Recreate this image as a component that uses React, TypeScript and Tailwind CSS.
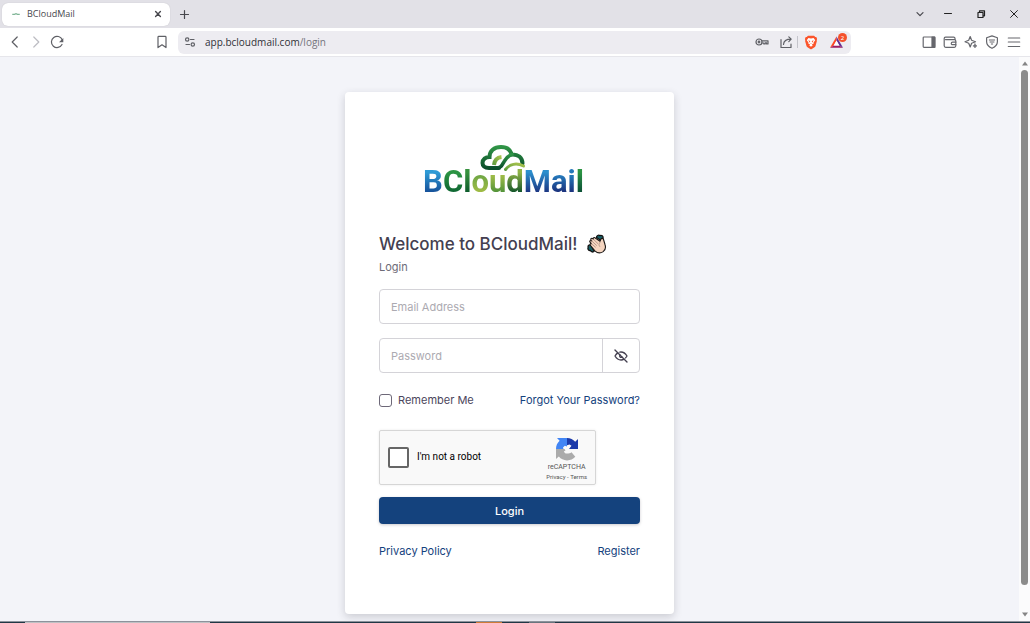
import React from "react";

type IconProps = { className?: string; children: React.ReactNode; box?: string };

function Icon({ className = "size-4", children, box = "0 0 16 16" }: IconProps) {
  return (
    <svg
      viewBox={box}
      className={className}
      fill="none"
      stroke="currentColor"
      strokeWidth="1.2"
      strokeLinecap="round"
      strokeLinejoin="round"
      aria-hidden="true"
    >
      {children}
    </svg>
  );
}

function ToolButton({ label, children }: { label: string; children: React.ReactNode }) {
  return (
    <button type="button" aria-label={label} className="flex size-4 shrink-0 items-center justify-center">
      {children}
    </button>
  );
}

function TabStrip() {
  return (
    <div className="flex h-7 items-center bg-[#e2e1e7] pr-2 text-[#47474d]">
      <div className="ml-0.5 flex h-[23px] w-[168px] items-center rounded-md bg-white pr-1 pl-2 shadow-[0_0_1px_rgba(0,0,0,0.2)]">
        <svg viewBox="0 0 16 16" className="mr-1 size-3" fill="none" aria-hidden="true">
          <path d="M3 8.500h3l2-1 2 1h3" stroke="#7fb596" strokeWidth="1.500" />
        </svg>
        <span className="flex-1 pl-px font-['Open_Sans',sans-serif] text-[9px] leading-3">BCloudMail</span>
        <ToolButton label="Close tab">
          <Icon>
            <path d="M5.6 5.6l4.8 4.8M10.4 5.6l-4.8 4.8" strokeWidth="1.4" />
          </Icon>
        </ToolButton>
      </div>
      <div className="ml-1.5">
        <ToolButton label="New tab">
          <Icon>
            <path d="M8.500 4.500v8M4.500 8.500h8" />
          </Icon>
        </ToolButton>
      </div>
      <div className="ml-auto flex items-center">
        <ToolButton label="Search tabs">
          <Icon>
            <path d="M5 6.7l3 3 3-3" />
          </Icon>
        </ToolButton>
        <div className="ml-3 flex gap-[17px] text-[#222]">
          <ToolButton label="Minimize">
            <Icon>
              <path d="M4.500 7.500h7" strokeWidth="1" />
            </Icon>
          </ToolButton>
          <ToolButton label="Restore">
            <Icon>
              <path d="M5 6.5h5v5H5zM6.5 6V4.8h5v5h-1" />
            </Icon>
          </ToolButton>
          <ToolButton label="Close window">
            <Icon>
              <path d="M4.6 4.6l6.8 6.8M11.4 4.6l-6.8 6.8" strokeWidth="1" />
            </Icon>
          </ToolButton>
        </div>
      </div>
    </div>
  );
}

function Toolbar() {
  return (
    <div className="flex h-[29px] items-center border-b border-[#e6e6eb] bg-white pr-2 pl-[7px] text-[#5f6066]">
      <div className="flex gap-[5px]">
        <ToolButton label="Back">
          <Icon>
            <path d="M10.2 3L5.2 8l5 5" />
          </Icon>
        </ToolButton>
        <span className="flex text-[#bdbdc3]">
          <ToolButton label="Forward">
            <Icon>
              <path d="M5.8 3l5 5-5 5" />
            </Icon>
          </ToolButton>
        </span>
        <ToolButton label="Reload">
          <Icon>
            <path d="M13 10.500A5.600 5.600 0 1 1 13.200 5.800" />
            <path d="M14.300 4v4.300H10z" fill="currentColor" stroke="none" />
          </Icon>
        </ToolButton>
      </div>
      <div className="ml-[89px]">
        <ToolButton label="Bookmark">
          <Icon>
            <path d="M4 3.2c0-.5.3-.8.8-.8h6.4c.5 0 .8.3.8.8v10.4L8 10.8l-4 2.8z" />
          </Icon>
        </ToolButton>
      </div>
      <div className="ml-2 flex h-[23px] min-w-0 flex-1 items-center rounded-md bg-[#edecf1] pr-1.5 pl-1">
        <ToolButton label="Site settings">
          <Icon>
            <circle cx="5.2" cy="5.5" r="1.7" />
            <path d="M8.5 5.5H12M4 10.5h3.5" />
            <circle cx="10.8" cy="10.5" r="1.7" />
          </Icon>
        </ToolButton>
        <div className="ml-[7px] flex-1 truncate font-['Open_Sans',sans-serif] text-[10px] leading-4 text-[#303036]">
          app.bcloudmail.com<span className="text-[#74747c]">/login</span>
        </div>
        <div className="flex items-center">
          <ToolButton label="Passwords">
            <Icon>
              <circle cx="5" cy="8" r="3" />
              <circle cx="5" cy="8" r="0.8" />
              <path d="M8 6.8h6v3.2h-1.4V8.800h-1.4V10H9.800V9H8" />
            </Icon>
          </ToolButton>
          <span className="ml-2 flex">
            <ToolButton label="Share">
              <Icon>
                <path d="M3 5.500v8h10v-3.300M5.500 10.500c.2-3.400 2-5.300 7.500-5.300M10.800 2.800l2.400 2.400-2.400 2.400" />
              </Icon>
            </ToolButton>
          </span>
          <span className="ml-[3px] h-3 w-px bg-[#c4c4cb]" />
          <span className="ml-[5px] flex">
            <ToolButton label="Brave Shields">
              <svg viewBox="0 0 16 16" className="size-4" aria-hidden="true">
                <path
                  d="M5 1.800h6l1.300 1.300 1-.1.800 2-.4 1.200.2.800-1.400 5c-.2.600-.5 1-1 1.300L8.800 15a1.500 1.500 0 0 1-1.600 0l-2.700-1.700c-.5-.3-.8-.7-1-1.300L2.100 7l.2-.8L1.900 5l.8-2 1 .1z"
                  fill="#fb542b"
                />
                <path
                  d="M5.400 4l2.600.5L10.600 4l1.600 2.200-1.700 2.300.3 1-1.900.8.900 1L8 12.800l-1.800-1.500.9-1-1.900-.8.3-1L3.800 6.200z"
                  fill="#fff"
                />
                <path d="M5.200 6.300l2 .7-.3 1.700zM10.800 6.300l-2 .7.3 1.700zM7.400 9h1.200L8 10z" fill="#fb542b" />
              </svg>
            </ToolButton>
          </span>
          <span className="relative ml-[10px] flex">
            <ToolButton label="Brave Rewards">
              <svg viewBox="0 0 16 16" className="size-4" aria-hidden="true">
                <path d="M7.500 2.500L1 13.700l3.700-2.100 2.800-5z" fill="#ff4724" />
                <path d="M1 13.700h13l-3.700-2.100H4.700z" fill="#9e1f63" />
                <path d="M14 13.700L7.500 2.500v4.100l2.800 5z" fill="#662d91" />
                <path d="M7.500 6.600l2.800 5H4.700z" fill="#fff" />
              </svg>
            </ToolButton>
            <span className="absolute -top-px -right-0.5 flex size-[9px] items-center justify-center rounded-full bg-[#f4512c] text-[6px] leading-none text-white">
              2
            </span>
          </span>
        </div>
      </div>
      <div className="ml-[70px] flex gap-[5px] text-[#66676d]">
        <ToolButton label="Sidebar">
          <Icon>
            <rect x="2.200" y="3" width="11.600" height="10.400" rx="0.800" />
            <path d="M11 3h2.800v10.400H11z" fill="currentColor" />
          </Icon>
        </ToolButton>
        <ToolButton label="Wallet">
          <Icon>
            <path d="M13 5.500V4.500c0-.8-.5-1.300-1.300-1.300H3.500c-.8 0-1.300.5-1.300 1.200v7.400c0 .9.600 1.500 1.500 1.500h8.600c.9 0 1.500-.6 1.500-1.500V7c0-.8-.6-1.400-1.500-1.400H3.500" />
            <path d="M13.800 8.200h-3.300a1.200 1.200 0 0 0 0 2.500h3.300" />
          </Icon>
        </ToolButton>
        <ToolButton label="Assistant">
          <Icon>
            <path d="M7.200 2.500l1.400 3.700 3.900 1.500-3.900 1.500-1.400 3.800-1.500-3.800L2 7.700l3.700-1.500z" />
            <path d="M12 9.800l.5 1.500 1.500.6-1.500.6-.5 1.500-.6-1.500-1.500-.6 1.500-.6z" fill="currentColor" strokeWidth="0.600" />
          </Icon>
        </ToolButton>
        <ToolButton label="VPN">
          <Icon>
            <path d="M8 1.900l5.400 1.800v4c0 3-2 5-5.400 6.600-3.400-1.600-5.400-3.600-5.400-6.600v-4z" />
            <path d="M5.300 6h5.400M6 8h4M7.300 10h1.400" strokeWidth="1" />
          </Icon>
        </ToolButton>
        <span className="ml-px flex">
          <ToolButton label="Menu">
            <Icon>
              <path d="M2.300 4h11.400M2.300 8h11.400M2.300 12.500h11.400" />
            </Icon>
          </ToolButton>
        </span>
      </div>
    </div>
  );
}

function Logo() {
  return (
    <div className="mx-auto flex w-fit flex-col items-center pr-3">
      <svg viewBox="0 0 46 28" className="h-7 w-[46px]" fill="none" strokeLinecap="round" aria-hidden="true">
        <defs>
          <linearGradient id="cloudDark" x1="0" y1="0" x2="0" y2="1">
            <stop offset="0" stopColor="#2f9446" />
            <stop offset="1" stopColor="#0b4e2b" />
          </linearGradient>
          <linearGradient id="cloudLight" x1="0" y1="1" x2="1" y2="0">
            <stop offset="0" stopColor="#5f9c3c" />
            <stop offset="1" stopColor="#a9c34d" />
          </linearGradient>
        </defs>
        <path d="M14 21c.5-4.500 3-7.500 7.500-8" stroke="url(#cloudLight)" strokeWidth="4" strokeLinecap="butt" />
        <path
          d="M19 24H9C4.500 24 2.500 21.500 2.500 19c0-3.700 3-6 7-6C9.500 7.200 14 3 21 3c6 0 9.500 3 10.500 7.500 6.500-.5 11 3 11 9"
          stroke="url(#cloudDark)"
          strokeWidth="4"
        />
        <path d="M16 24c6 0 6-3.500 8.500-7 2-3 4-5.500 7.500-6.500" stroke="url(#cloudDark)" strokeWidth="3.600" />
        <path d="M25.500 25.500c4-5.500 11-7 18-3.500" stroke="url(#cloudLight)" strokeWidth="3" />
      </svg>
      <div
        role="img"
        aria-label="BCloudMail"
        className="-mt-[7px] font-['Roboto',sans-serif] text-[31px] leading-[34px] font-bold text-transparent"
      >
        <span className="bg-linear-to-b from-[#2f9bd6] from-25% to-[#164f98] to-80% bg-clip-text">B</span>
        <span className="bg-linear-to-b from-[#2b9443] from-25% to-[#0d6531] to-80% bg-clip-text">C</span>
        <span className="bg-linear-to-b from-[#37923f] from-25% to-[#0a5a2b] to-80% bg-clip-text">l</span>
        <span className="bg-linear-to-b from-[#70a744] from-35% to-[#a3bd45] to-80% bg-clip-text">o</span>
        <span className="bg-linear-to-b from-[#9dbb47] from-35% to-[#4f9239] to-80% bg-clip-text">u</span>
        <span className="bg-linear-to-b from-[#8fb447] from-25% to-[#0b5429] to-80% bg-clip-text">d</span>
        <span className="bg-linear-to-b from-[#2b8fce] from-25% to-[#1c3480] to-80% bg-clip-text">M</span>
        <span className="bg-linear-to-b from-[#2478ba] from-35% to-[#1b2f7a] to-80% bg-clip-text">ai</span>
        <span className="bg-linear-to-b from-[#2b9443] from-25% to-[#0b4e35] to-80% bg-clip-text">l</span>
      </div>
    </div>
  );
}

function WavingHand() {
  return (
    <svg viewBox="0 0 20 20" className="size-5" strokeLinejoin="round" strokeLinecap="round" aria-hidden="true">
      <path d="M9.500 3.500c0-2 2-2.800 3.500-1.900C14.500.9 16.500 2 16 4.500l-2 2zM4 11c-2-.4-3.300.6-2.800 2.200C.4 15 1.500 16.800 3.500 16.500c.8 1.600 2.600 2 3.700.7z" fill="#176067" stroke="#111" strokeWidth="1.300" />
      <path
        d="M3 8.200c-.8-1.200.7-2.300 1.700-1.300L4 6c-.7-1.300.8-2.300 1.800-1.300l.5.500c-.5-1.300 1-2.300 2-1.200l4.700 3.300.8-2c.6-1.300 2.300-1.200 2.700.2l1.500 5c1 3 .3 5.500-1.800 7.100-2.700 1.900-6 1.400-8.300-.8L3.500 11.500c-1-1-.2-2.300.9-1.800z"
        fill="#f5d5c0"
        stroke="#1b1715"
        strokeWidth="1.100"
      />
      <path d="M4.700 6.900l4.800 4.500M6.300 5.200l4.500 4.300M4.400 9.700l4 3.400M13 8.300c-1.300 1.500-1.300 3-.3 4.200" fill="none" stroke="#9b8071" strokeWidth="0.700" />
    </svg>
  );
}

function Recaptcha() {
  return (
    <div className="mt-[22px] flex h-[55px] w-[217px] items-center rounded-xs border border-[#d6d6d6] bg-[#f9f9f9] pr-2 pb-px pl-2 font-['Roboto',sans-serif] shadow-[0_0_3px_rgba(0,0,0,0.08)]">
      <input
        id="robot"
        type="checkbox"
        className="size-[21px] shrink-0 appearance-none rounded-xs border-2 border-[#666] bg-white checked:bg-[#4f4f4f]"
      />
      <label htmlFor="robot" className="flex-1 pl-2 text-[10px] leading-4 text-black">
        I'm not a robot
      </label>
      <div className="flex flex-col items-center pt-1 text-[#555]">
        <svg viewBox="0 0 24 24" className="size-6" aria-hidden="true">
          <path d="M12 1c3.300 0 6.200 1.400 8.200 3.700L23 2v10h-9l2.500-3.200-2-1.300-2.500.8z" fill="#1c3aa9" />
          <path d="M1 12C1 8.700 2.400 5.800 4.600 3.800L2 1h10v8.500L9.800 8.800 8 10.500l.5 1.500z" fill="#4285f4" />
          <path d="M1 12h8.500l1 1.500-1.700 1c1 1.700 1.700 2 3.200 2 2 0 3.200-.3 4.500-1.300l3.800 4.600A11 11 0 0 1 3.800 19.500L1 22z" fill="#ababab" />
        </svg>
        <span className="mt-0.5 text-[7px] leading-[9px]">reCAPTCHA</span>
        <span className="text-[6px] leading-[9px]">
          <a href="#privacy">Privacy</a> - <a href="#terms">Terms</a>
        </span>
      </div>
    </div>
  );
}

function LoginCard() {
  return (
    <main className="w-[329px] max-w-full rounded-sm bg-white px-[34px] pt-[52px] pb-[55px] font-['Inter',sans-serif] text-[11px] leading-4 text-[#4b465c] shadow-[0_3px_8px_rgba(47,43,61,0.2)]">
      <Logo />
      <h1 className="mt-[33px] flex items-center gap-[10px] text-[17px] leading-6 font-medium text-[#444050]">
        Welcome to BCloudMail!
        <WavingHand />
      </h1>
      <p className="mt-[3px] text-[#6d6b77]">Login</p>
      <form onSubmit={(event) => event.preventDefault()}>
        <input
          type="email"
          aria-label="Email Address"
          placeholder="Email Address"
          className="mt-3.5 block h-[35px] w-full rounded border border-[#d4d3d8] px-[11px] outline-none placeholder:text-[#acaab1]"
        />
        <div className="mt-3.5 flex h-[35px] rounded border border-[#d4d3d8]">
          <input
            type="password"
            aria-label="Password"
            placeholder="Password"
            className="min-w-0 flex-1 bg-transparent px-[11px] outline-none placeholder:text-[#acaab1]"
          />
          <button
            type="button"
            aria-label="Show password"
            className="flex w-[37px] items-center justify-center border-l border-[#d4d3d8] text-[#444050]"
          >
            <Icon box="0 0 24 24" className="size-4">
              <g strokeWidth="2">
                <path d="M10.585 10.587a2 2 0 0 0 2.829 2.828" />
                <path d="M16.681 16.673a8.717 8.717 0 0 1-4.681 1.327c-3.600 0-6.600-2-9-6 1.272-2.120 2.712-3.678 4.320-4.674m2.860-1.146a9.055 9.055 0 0 1 1.820-.18c3.600 0 6.600 2 9 6-.666 1.110-1.379 2.067-2.138 2.870" />
                <path d="M3 3l18 18" />
              </g>
            </Icon>
          </button>
        </div>
        <div className="mt-[19px] flex items-center justify-between">
          <label className="flex items-center gap-1.5">
            <input
              type="checkbox"
              className="size-[13px] appearance-none rounded-[3px] border border-[#6d6878] checked:bg-[#14427d]"
            />
            Remember Me
          </label>
          <a href="#forgot" className="text-[#14427d]">
            Forgot Your Password?
          </a>
        </div>
        <Recaptcha />
        <button
          type="submit"
          className="mt-3 block h-[27px] w-full rounded bg-[#14427d] font-medium text-white shadow-[0_1px_3px_rgba(47,43,61,0.25)]"
        >
          Login
        </button>
      </form>
      <div className="mt-[19px] flex justify-between text-[#14427d]">
        <a href="#privacy-policy">Privacy Policy</a>
        <a href="#register">Register</a>
      </div>
    </main>
  );
}

function Scrollbar() {
  return (
    <div className="flex w-[11px] shrink-0 flex-col items-center bg-[#fbfbfc] text-[#858585]" aria-hidden="true">
      <svg viewBox="0 0 10 13" className="h-[13px] w-2.5" fill="currentColor">
        <path d="M2 8.500L5 4.500l3 4z" />
      </svg>
      <div className="flex w-full flex-1 flex-col items-center">
        <div className="w-[7px] grow-[22] rounded-full bg-[#8b8b8b]" />
        <div className="grow" />
      </div>
      <svg viewBox="0 0 10 13" className="h-[13px] w-2.5" fill="currentColor">
        <path d="M2 4.500h6l-3 4z" />
      </svg>
    </div>
  );
}

export default function App() {
  return (
    <div className="flex min-h-screen flex-col bg-[#f3f4f9] font-['Noto_Sans',sans-serif]">
      <TabStrip />
      <Toolbar />
      <div className="flex flex-1">
        <div className="flex flex-1 items-start justify-center pt-[35px] pb-1.5">
          <LoginCard />
        </div>
        <Scrollbar />
      </div>
      <div className="flex h-0.5 border-t border-[#8d929b] bg-[#203745]" aria-hidden="true">
        <span className="ml-[25px] h-px w-[185px] bg-[#bfc1c4]" />
        <span className="ml-[266px] h-px w-[26px] bg-[#cf7b35]" />
        <span className="ml-[27px] h-px w-[26px] bg-[#68757e]" />
      </div>
    </div>
  );
}
